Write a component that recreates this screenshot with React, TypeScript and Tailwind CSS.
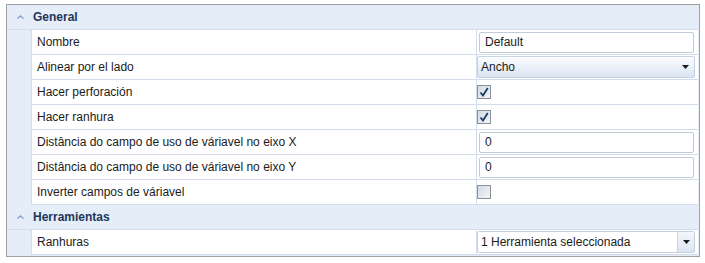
const font = { fontFamily: '"Liberation Sans", Arial, sans-serif' };

function Chevron() {
  return (
    <svg width="7" height="4" viewBox="0 0 7 4" className="block">
      <path d="M0.5 3.5 L3.5 0.8 L6.5 3.5" fill="none" stroke="#7f9fcb" strokeWidth="1.2" />
    </svg>
  );
}

function Arrow() {
  return (
    <svg width="7" height="4" viewBox="0 0 7 4" className="block">
      <path d="M0 0 H7 L3.5 4 Z" fill="#1a1a1a" />
    </svg>
  );
}

function Header({ title }: { title: string }) {
  return (
    <div className="flex h-[25px] items-center border-b border-[#d3dded] bg-[#e5edf9]">
      <div className="flex w-[24px] justify-center pl-[2px] pb-[1px]">
        <Chevron />
      </div>
      <span className="pl-[2px] text-[12px] font-bold text-[#1e3658]">{title}</span>
    </div>
  );
}

function Row({ label, children }: { label: string; children?: React.ReactNode }) {
  return (
    <div className="flex h-[25px] bg-[#e5edf9]">
      <div className="w-[24px] shrink-0" />
      <div className="flex w-[446px] shrink-0 items-center border-b border-l border-r border-[#d3dded] bg-white pl-[5px] text-[12px] text-[#1b1b1b]">
        {label}
      </div>
      <div className="flex flex-1 items-center border-b border-[#d3dded] bg-white">{children}</div>
    </div>
  );
}

function TextBox({ value }: { value: string }) {
  return (
    <div className="ml-[2px] mr-[4px] flex h-[21px] flex-1 items-center rounded-[2px] border border-[#c2ccd9] pl-[5px] text-[12px] text-[#1b1b1b]">
      {value}
    </div>
  );
}

function Check({ checked }: { checked: boolean }) {
  return (
    <div className="flex h-[14px] w-[14px] items-center justify-center border border-[#8a8f98] bg-gradient-to-br from-[#d4dbe5] to-[#f3f5f8]">
      {checked && (
        <svg width="10" height="10" viewBox="0 0 10 10">
          <path d="M1.5 5.5 L4 8.5 L8.8 1" fill="none" stroke="#1c3a62" strokeWidth="1.8" />
        </svg>
      )}
    </div>
  );
}

export default function App() {
  return (
    <div className="h-[263px] w-[705px] bg-white pl-[6px] pt-[4px]" style={font}>
      <div className="h-[253px] w-[694px] overflow-hidden border border-[#a0a0a0] bg-[#e5edf9] pr-[1px]">
        <Header title="General" />
        <Row label="Nombre">
          <TextBox value="Default" />
        </Row>
        <Row label="Alinear por el lado">
          <div className="mr-[3px] flex h-[22px] flex-1 items-center justify-between rounded-[2px] border border-[#c6d3e5] bg-gradient-to-b from-[#fcfdfe] to-[#d9e4f3] pl-[3px] pr-[5px] text-[12px] text-[#1b1b1b]">
            Ancho
            <Arrow />
          </div>
        </Row>
        <Row label="Hacer perforación">
          <Check checked />
        </Row>
        <Row label="Hacer ranhura">
          <Check checked />
        </Row>
        <Row label="Distância do campo de uso de váriavel no eixo X">
          <TextBox value="0" />
        </Row>
        <Row label="Distância do campo de uso de váriavel no eixo Y">
          <TextBox value="0" />
        </Row>
        <Row label="Inverter campos de váriavel">
          <Check checked={false} />
        </Row>
        <Header title="Herramientas" />
        <Row label="Ranhuras">
          <div className="mr-[3px] flex h-[22px] flex-1 items-stretch rounded-[2px] border border-[#c6cfdb] bg-white text-[12px] text-[#1b1b1b]">
            <div className="flex flex-1 items-center pl-[3px]">1 Herramienta seleccionada</div>
            <div className="flex w-[17px] items-center justify-center border-l border-[#c6d3e5] bg-gradient-to-b from-[#f4f7fb] to-[#dbe5f2]">
              <Arrow />
            </div>
          </div>
        </Row>
      </div>
    </div>
  );
}
